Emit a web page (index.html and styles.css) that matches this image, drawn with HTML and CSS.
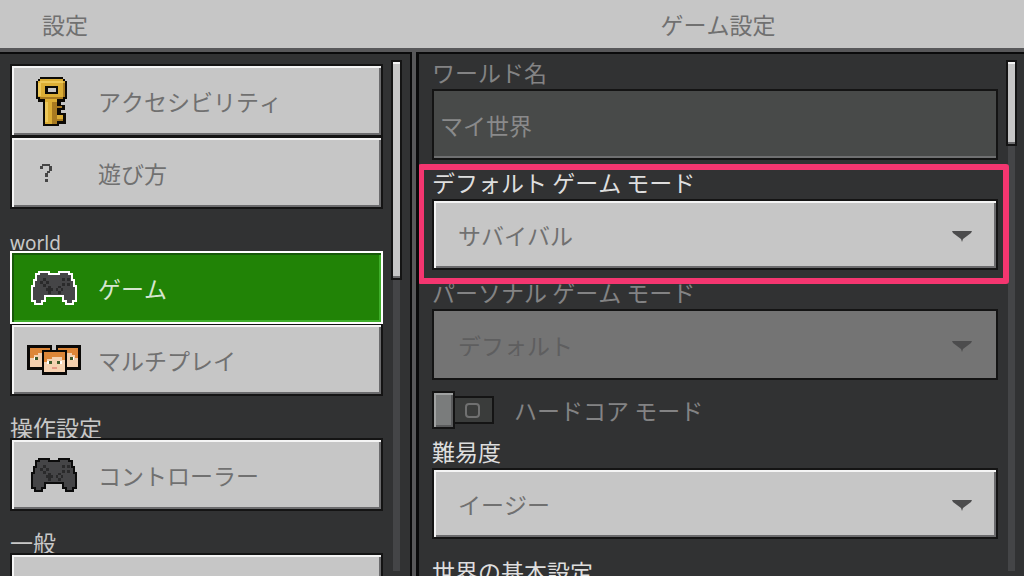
FILE: index.html
```html
<!DOCTYPE html>
<html lang="ja">
<head>
    <meta charset="UTF-8">
    <meta name="viewport" content="width=device-width, initial-scale=1.0">
    <title>ゲーム設定</title>
    <link rel="stylesheet" href="styles.css">
</head>
<body>
    <!-- shared controller shape -->
    <svg class="defs" aria-hidden="true">
        <symbol id="pad" viewBox="0 0 46 34">
            <path class="pad-body" d="M8 1h10v2h10V1h10v2h3v6h2v6h2v15h-3v3h-7v-3h-3v-5H14v5h-3v3H4v-3H1V15h2V9h2V3h3z"/>
            <path class="pad-keys" d="M12 7h3v3h-3zM9 10h3v3H9zM15 10h3v3h-3zM12 13h3v3h-3zM31 7h3v3h-3zM36 7h3v3h-3zM31 12h3v3h-3zM36 12h3v3h-3zM17 15h3v2h2v3h-2v3h-3v-3h-2v-3h2zM27 15h3v2h-3zM25 17h2v3h-2zM30 17h2v3h-2zM27 20h3v3h-3z"/>
        </symbol>
    </svg>

    <header class="topbar">
        <h1 class="topbar-menu">設定</h1>
        <h2 class="topbar-title">ゲーム設定</h2>
    </header>

    <div class="screen">
        <div class="panel sidebar">
            <nav class="menu">
                <button class="menu-item">
                    <span class="icon">
                        <svg width="37" height="49" viewBox="0 0 36 48" shape-rendering="crispEdges">
                            <path d="M4 0h22v2h2v2h2v18h-2v2h-4v3h4v7h1v12h-7v2H7V24H2v-2H0V4h2V2h2z" fill="#0c0a06"/>
                            <path d="M4 2h22v2h2v16h-2v2h-6v6h5v2h-5v7h6v6h-7v3H9V22H4v-2H2V4h2z" fill="#dcae35"/>
                            <path d="M4 4h22v2H4zM2 6h3v13H2zM9 24h3v20H9z" fill="#edc85a"/>
                            <path d="M4 20h22v2H4zM26 6h2v14h-2zM16 24h4v22h-4zM20 28h5v2h-5zM20 41h6v2h-6z" fill="#a87a20"/>
                            <path d="M9 9h12v8H9z" fill="#0c0a06"/>
                            <path d="M12 11h7v4h-7zM24 32h5v3h-5z" fill="#c6c6c6"/>
                        </svg>
                    </span>
                    アクセシビリティ
                </button>
                <button class="menu-item">
                    <span class="icon">
                        <svg width="30" height="18" viewBox="0 0 30 18">
                            <path d="M3 0h8v2H3zM1 2h3v3H1zM10 2h3v5h-3zM8 7h3v2H8zM6 9h3v4H6zM6 15h3v3H6z" fill="#454545"/>
                        </svg>
                    </span>
                    遊び方
                </button>

                <h3 class="menu-label menu-label-latin">world</h3>
                <button class="menu-item selected">
                    <span class="icon"><svg width="46" height="34"><use href="#pad"/></svg></span>
                    ゲーム
                </button>
                <button class="menu-item">
                    <span class="icon">
                        <svg width="54" height="30" viewBox="0 0 54 30" shape-rendering="crispEdges">
                            <path d="M0 0h25v25H0zM29 0h25v25H29z" fill="#0a0806"/>
                            <path d="M3 3h20v19H3zM31 3h20v19H31z" fill="#f3cfae"/>
                            <path d="M3 3h20v5H11v2H7v3H3zM31 3h20v10h-3v-3h-3V8H31z" fill="#dd8638"/>
                            <path d="M7 12h4v3H7zM43 12h4v3h-4z" fill="#fff"/>
                            <path d="M8 12h3v3H8zM43 12h3v3h-3z" fill="#3f5a2c"/>
                            <path d="M15 5h25v25H15z" fill="#0a0806"/>
                            <path d="M17 7h21v20H17z" fill="#f5d2b2"/>
                            <path d="M17 7h21v8h-3v-3H25v2h-5v3h-3z" fill="#dd8638"/>
                            <path d="M20 16h5v3h-5zM30 16h5v3h-5z" fill="#fff"/>
                            <path d="M22 16h3v3h-3zM30 16h3v3h-3z" fill="#3f5a2c"/>
                            <path d="M25 22h5v2h-5z" fill="#e79b88"/>
                        </svg>
                    </span>
                    マルチプレイ
                </button>

                <h3 class="menu-label">操作設定</h3>
                <button class="menu-item">
                    <span class="icon"><svg width="46" height="34"><use href="#pad"/></svg></span>
                    コントローラー
                </button>

                <h3 class="menu-label">一般</h3>
                <button class="menu-item" aria-label="一般"></button>
            </nav>
            <div class="scrollbar"><div class="thumb thumb-menu"></div></div>
        </div>

        <main class="panel content">
            <form class="settings">
                <div class="field dim">
                    <label for="world-name">ワールド名</label>
                    <input class="textbox" id="world-name" type="text" value="マイ世界" disabled>
                </div>
                <div class="field highlight">
                    <label for="default-mode">デフォルト ゲーム モード</label>
                    <div class="dropdown">
                        <select id="default-mode"><option>サバイバル</option></select>
                        <svg class="arrow" width="20" height="11" viewBox="0 0 20 11"><path d="M0 0h20l-1 2-8 6-1 3-1-3-8-6z"/></svg>
                    </div>
                </div>
                <div class="field dim">
                    <label for="personal-mode">パーソナル ゲーム モード</label>
                    <div class="dropdown">
                        <select id="personal-mode" disabled><option>デフォルト</option></select>
                        <svg class="arrow" width="20" height="11" viewBox="0 0 20 11"><path d="M0 0h20l-1 2-8 6-1 3-1-3-8-6z"/></svg>
                    </div>
                </div>
                <div class="toggle-row dim">
                    <input class="toggle" id="hardcore" type="checkbox" disabled>
                    <label for="hardcore">ハードコア モード</label>
                </div>
                <div class="field">
                    <label for="difficulty">難易度</label>
                    <div class="dropdown">
                        <select id="difficulty"><option>イージー</option></select>
                        <svg class="arrow" width="20" height="11" viewBox="0 0 20 11"><path d="M0 0h20l-1 2-8 6-1 3-1-3-8-6z"/></svg>
                    </div>
                </div>
                <h3 class="section-title">世界の基本設定</h3>
            </form>
            <div class="scrollbar"><div class="thumb thumb-content"></div></div>
        </main>
    </div>
</body>
</html>
```

FILE: styles.css
```css
*,
*::before,
*::after {
    margin: 0;
    padding: 0;
    box-sizing: border-box;
}

body {
    height: 100vh;
    overflow: hidden;
    display: flex;
    flex-direction: column;
    background: #58585a;
    color: #dedede;
    font-family: 'Noto Sans CJK JP', sans-serif;
    font-size: 23px;
    font-weight: 400;
    font-kerning: none;
    line-height: 22px;
}

h1, h2, h3, button, input, select {
    font: inherit;
    font-kerning: none;
}

.defs {
    position: absolute;
    width: 0;
    height: 0;
}

/* top bar */
.topbar {
    display: grid;
    grid-template-columns: 412fr 612fr;
    align-items: center;
    padding: 13px 0;
    background: #c6c6c6;
    color: #707070;
}

.topbar-menu {
    padding-left: 42px;
}

.topbar-title {
    text-align: center;
}

/* panels */
.screen {
    flex: 1;
    min-height: 0;
    display: grid;
    grid-template-columns: 412fr 608fr;
    gap: 4px;
    margin-top: 4px;
}

.panel {
    min-height: 0;
    overflow: hidden;
    display: flex;
    gap: 8px;
    background: #313233;
    border-top: 2px solid #0a0a0b;
}

.sidebar {
    padding: 6px 8px 0 10px;
    border-right: 2px solid #0a0a0b;
}

.content {
    padding: 6px 7px 0 13px;
    border-left: 3px solid #0a0a0b;
}

/* left menu */
.menu {
    flex: 1;
    min-width: 0;
    padding-top: 4px;
}

.menu-item {
    --pad-line: #0c0c0c;
    position: relative;
    display: flex;
    align-items: center;
    gap: 16px;
    width: 100%;
    height: 73px;
    padding: 1px 14px 0;
    background: #c6c6c6;
    border: 2px solid #141414;
    box-shadow: inset 2px 2px #f4f4f4, inset -2px -2px #6b6b6d;
    color: #707070;
    text-align: left;
    cursor: pointer;
}

.menu-item + .menu-item {
    margin-top: -1px;
}

.menu-item.selected {
    --pad-line: #fff;
    z-index: 1;
    background: #218306;
    border-color: #fff;
    box-shadow: inset 2px 2px #17590a, inset -2px -2px #3fae2a;
    color: #d6e6d0;
}

.menu-label {
    padding-top: 20px;
    color: #c8c8c8;
}

.menu-label-latin {
    padding-top: 26px;
    font-family: 'Noto Sans', sans-serif;
    font-size: 19px;
    line-height: 16px;
}

.icon {
    display: flex;
    justify-content: center;
    width: 56px;
}

.pad-body {
    fill: #454547;
    stroke: var(--pad-line);
    stroke-width: 2;
}

.pad-keys {
    fill: #2a2a2b;
}

/* scrollbars */
.scrollbar {
    flex: none;
    width: 11px;
    height: calc(100% - 5px);
    background: linear-gradient(#444547, #444547) center / 7px 100% no-repeat;
}

.thumb {
    background: #c6c6c6;
    border: 2px solid #141414;
    box-shadow: inset 0 2px #f4f4f4, inset 0 -2px #6b6b6d;
}

.thumb-menu {
    height: 220px;
}

.thumb-content {
    height: 86px;
}

/* settings */
.settings {
    flex: 1;
    min-width: 0;
    display: flex;
    flex-direction: column;
    gap: 11px;
    padding-top: 1px;
}

.settings > * {
    flex: none;
}

.field {
    position: relative;
    display: flex;
    flex-direction: column;
    gap: 6px;
}

.dim {
    color: #838384;
}

.highlight::after {
    content: '';
    position: absolute;
    inset: -7px -11px -14px -14px;
    border: 6px solid #f43670;
    border-radius: 3px;
    pointer-events: none;
    z-index: 2;
}

.textbox,
.dropdown select {
    width: 100%;
    height: 71px;
    border: 2px solid #141414;
    border-radius: 0;
    outline: none;
}

.textbox {
    padding: 0 6px;
    background: #484a49;
    box-shadow: inset 0 -2px #6f7071;
    color: #8a8a8b;
}

.dropdown {
    position: relative;
    display: flex;
}

.dropdown select {
    appearance: none;
    padding: 0 48px 0 24px;
    background: #c6c6c6;
    box-shadow: inset 2px 2px #f4f4f4, inset -2px -2px #6b6b6d;
    color: #707070;
}

.dropdown select:disabled {
    background: #747474;
    box-shadow: none;
    color: #5e5e5f;
    opacity: 1;
}

.arrow {
    position: absolute;
    top: 32px;
    right: 26px;
    fill: #4c4c4d;
    pointer-events: none;
}

/* hardcore switch */
.toggle-row {
    display: flex;
    align-items: center;
    gap: 20px;
    height: 38px;
}

.toggle {
    appearance: none;
    position: relative;
    width: 62px;
    height: 28px;
    background: #3a3c3b;
    border: 2px solid #141414;
}

.toggle::before {
    content: '';
    position: absolute;
    top: -7px;
    left: -2px;
    width: 23px;
    height: 38px;
    background: #7a7c7c;
    border: 2px solid #141414;
    box-shadow: inset 2px 2px #a0a2a2, inset -2px -2px #5a5b5c;
}

.toggle::after {
    content: '';
    position: absolute;
    top: 5px;
    right: 12px;
    width: 15px;
    height: 15px;
    border: 2px solid #707171;
    border-radius: 4px;
}

.section-title {
    padding-top: 10px;
}
```
